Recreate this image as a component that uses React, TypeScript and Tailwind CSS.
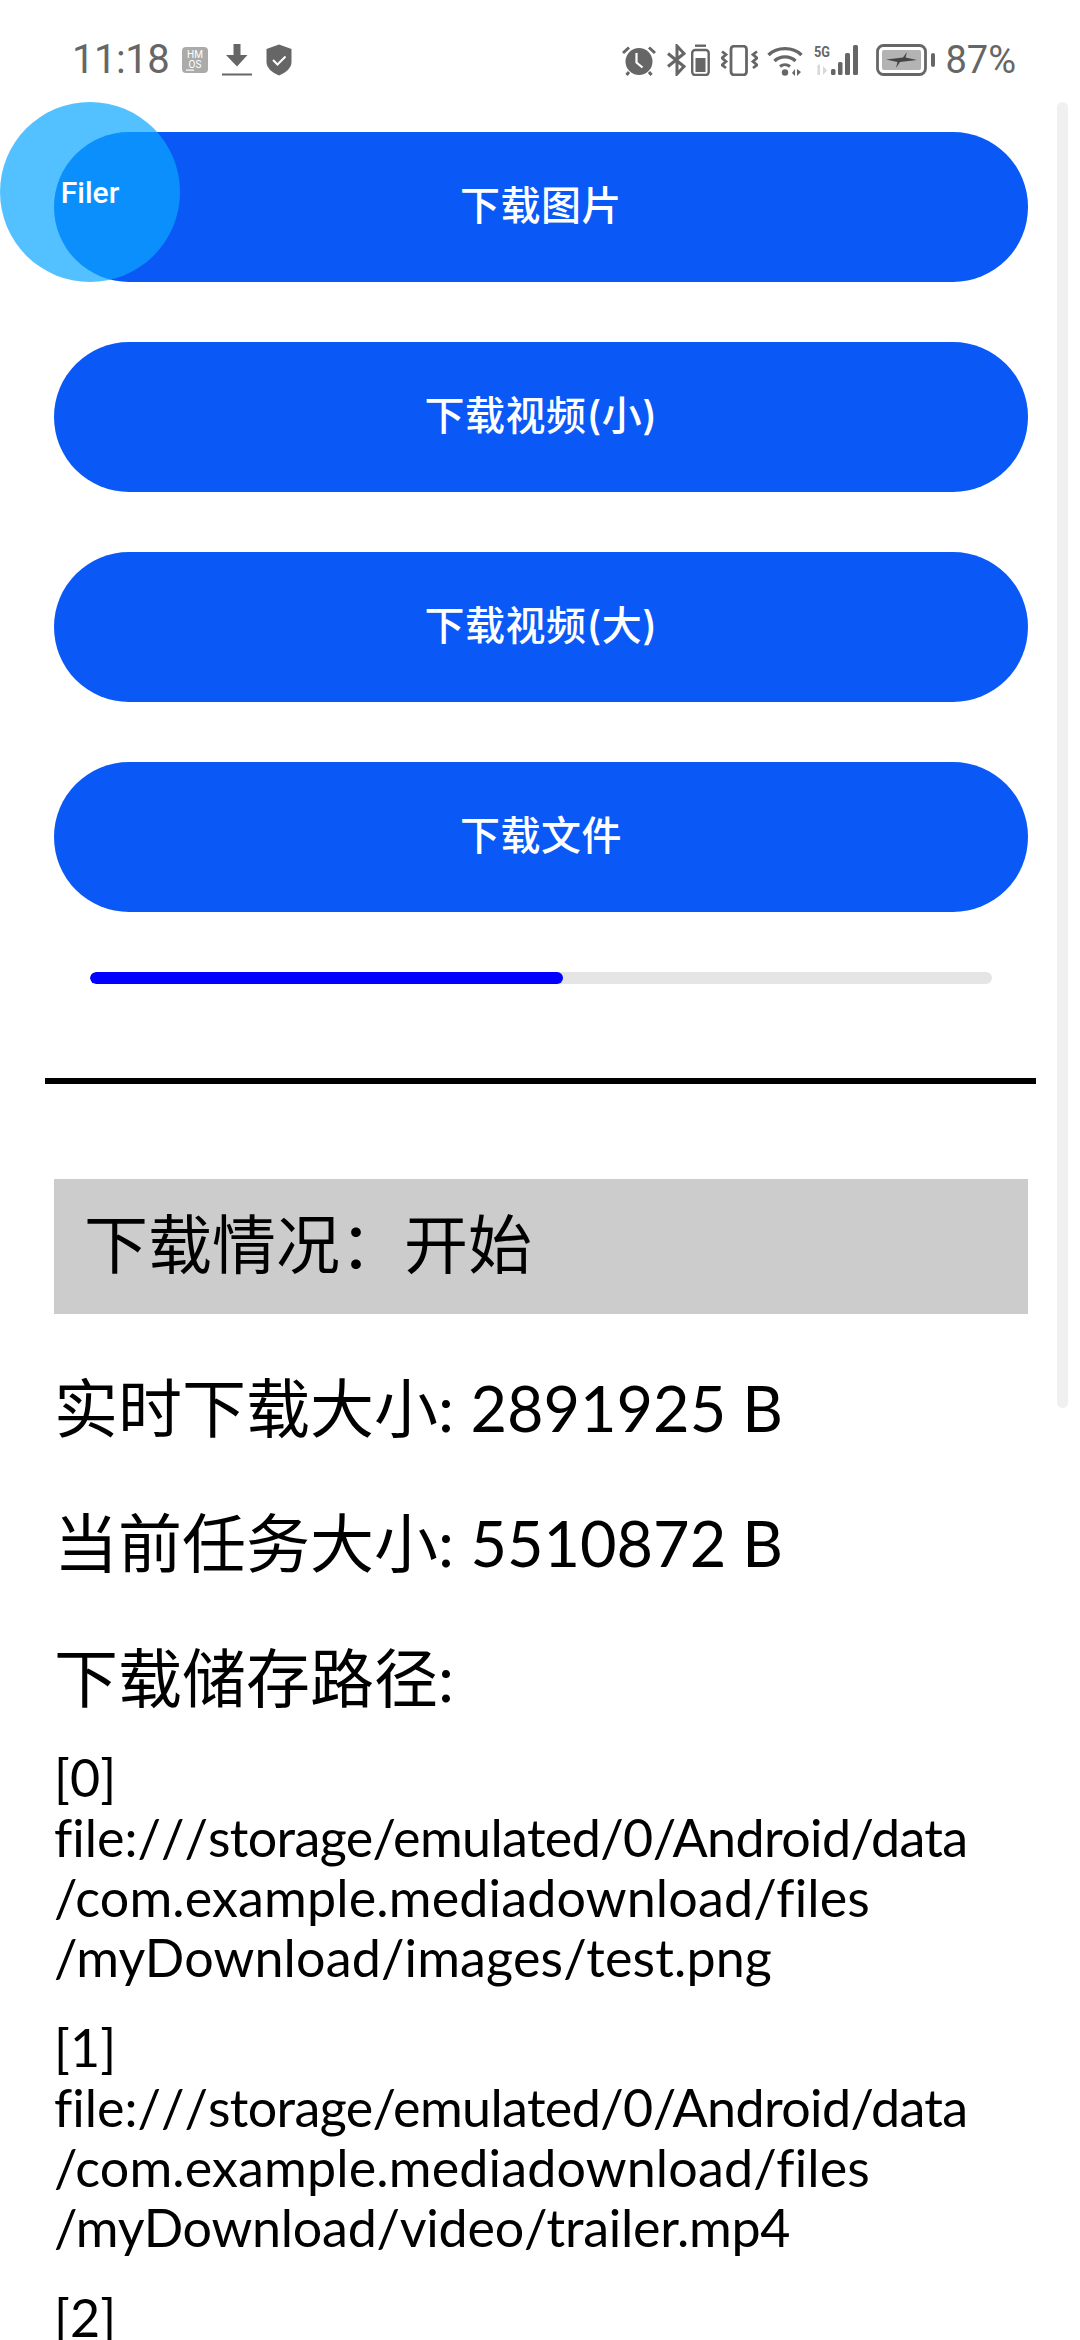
const DOWNLOADED = 2891925;
const TOTAL = 5510872;

const BUTTONS = ['下载图片', '下载视频(小)', '下载视频(大)', '下载文件'];

const PATHS = [
  ['[0]', 'file:///storage/emulated/0/Android/data', '/com.example.mediadownload/files', '/myDownload/images/test.png'],
  ['[1]', 'file:///storage/emulated/0/Android/data', '/com.example.mediadownload/files', '/myDownload/video/trailer.mp4'],
  ['[2]'],
];

// ── Status bar icons ────────────────────────────────────────────────────────

function HmosIcon() {
  return (
    <svg width="26" height="26" viewBox="0 0 26 26" className="ml-[13px]">
      <rect width="26" height="26" rx="4" fill="#ababab" />
      <text x="13" y="11" textAnchor="middle" fontSize="10" fill="#fff" fontFamily="Roboto">HM</text>
      <text x="13" y="21" textAnchor="middle" fontSize="10" fill="#fff" fontFamily="Roboto">OS</text>
      <rect x="4" y="22.5" width="8" height="1.2" fill="#fff" />
    </svg>
  );
}

function DownloadIcon() {
  return (
    <svg width="30" height="32" viewBox="0 0 30 32" className="ml-[14px]">
      <path d="M11.5 0h7v11h7L15 22.5 4 11h7.5z" fill="#666" />
      <rect y="29.5" width="30" height="2" fill="#666" />
    </svg>
  );
}

function ShieldIcon() {
  return (
    <svg width="26" height="32" viewBox="0 0 26 32" className="ml-[14px]">
      <path d="M13 0.5 25.5 5v13c0 6-5.5 10.5-12.500 13.500C6 28.500 0.500 24 0.500 18V5z" fill="#666" />
      <path d="M7 16l4.500 4.500L19.500 12.500" fill="none" stroke="#fff" strokeWidth="2" />
    </svg>
  );
}

function AlarmIcon() {
  return (
    <svg width="34" height="31" viewBox="0 0 34 31">
      <circle cx="17" cy="16.500" r="13.500" fill="#666" />
      <path d="M1 8 7 2.500M33 8 27 2.500M7 27l-2.500 3M27 27l2.500 3" stroke="#666" strokeWidth="3" fill="none" />
      <path d="M14.500 8v9.500l6 5" stroke="#fff" strokeWidth="2.200" fill="none" />
    </svg>
  );
}

function BluetoothBatteryIcon() {
  return (
    <svg width="43" height="32" viewBox="0 0 43 32" className="ml-[11px]">
      <path d="M1 9.500 17 22.500 10 30V2l7 7.500L1 22.500" fill="none" stroke="#666" strokeWidth="3" />
      <rect x="25.200" y="6" width="16.500" height="25" rx="3" fill="none" stroke="#666" strokeWidth="2.400" />
      <rect x="28" y="0.500" width="11" height="2.400" fill="#666" />
      <rect x="28.500" y="14" width="10" height="14" fill="#666" />
    </svg>
  );
}

function VibrateIcon() {
  return (
    <svg width="37" height="31" viewBox="0 0 37 31" className="ml-[11px]">
      <rect x="10" y="1.200" width="15.500" height="28.600" rx="3" fill="none" stroke="#666" strokeWidth="2.800" />
      <path d="M1 6.500l4 3-4 3.500 4 3.500-4 3.500 4 3" fill="none" stroke="#666" strokeWidth="2.800" />
      <path d="M36 6.500l-4 3 4 3.500-4 3.500 4 3.500-4 3" fill="none" stroke="#666" strokeWidth="2.800" />
    </svg>
  );
}

function WifiIcon() {
  return (
    <svg width="37" height="31" viewBox="0 0 37 31" className="ml-[9px]">
      <path d="M1.500 10C10 1.500 26 1.500 34.500 10" fill="none" stroke="#666" strokeWidth="3.400" />
      <path d="M7.500 16C13 10.500 23 10.500 28.500 16" fill="none" stroke="#666" strokeWidth="3.400" />
      <path d="M13 21.500C16 19 20 19 23 21.500" fill="none" stroke="#666" strokeWidth="3" />
      <circle cx="18" cy="27.500" r="3.200" fill="#666" />
      <path d="M25 28l3-4v7zM30 24v7l4-4z" fill="#666" />
    </svg>
  );
}

function SignalIcon() {
  return (
    <svg width="49" height="32" viewBox="0 0 49 32" className="ml-[10px]">
      <text x="0" y="13" fontSize="15" fontWeight="700" fill="#666" fontFamily="Roboto" textLength="16" lengthAdjust="spacingAndGlyphs">5G</text>
      <path d="M3 22l3-2v11h-2.500v-7.500zM9 22v9l4-4.500z" fill="#d8d8d8" />
      <rect x="17" y="25" width="4.500" height="6" rx="1.500" fill="#666" />
      <rect x="24" y="18" width="4.500" height="13" rx="1.500" fill="#666" />
      <rect x="31" y="9" width="5" height="22" rx="1.500" fill="#666" />
      <rect x="39" y="1" width="5" height="30" rx="1.500" fill="#666" />
    </svg>
  );
}

function ChargingBatteryIcon() {
  return (
    <svg width="59" height="32" viewBox="0 0 59 32" className="ml-[13px]">
      <rect x="1.500" y="1.500" width="48" height="29" rx="6" fill="none" stroke="#666" strokeWidth="2.800" />
      <rect x="6" y="6" width="39" height="20" rx="2" fill="#b3b3b3" />
      <path d="M10 15.500 27 13.500 31 8 29.500 13.500 41 16 24 18 20 24 21.500 18z" fill="#444" />
      <rect x="55" y="9" width="4" height="14" rx="2" fill="#666" />
    </svg>
  );
}

function StatusBar() {
  return (
    <div className="flex items-center justify-between h-[132px] pl-[72px] pr-[64px] pb-[12px] text-[#666] font-['Roboto',sans-serif]">
      <div className="flex items-center">
        <span className="w-[97px] text-[40px] leading-none tracking-[-0.5px]">11:18</span>
        <HmosIcon />
        <DownloadIcon />
        <ShieldIcon />
      </div>
      <div className="flex items-center">
        <AlarmIcon />
        <BluetoothBatteryIcon />
        <VibrateIcon />
        <WifiIcon />
        <SignalIcon />
        <ChargingBatteryIcon />
        <span className="ml-[10px] text-[38px] leading-none">87%</span>
      </div>
    </div>
  );
}

function PathLine({ text }: { text: string }) {
  if (text.startsWith('file:///')) {
    return (
      <div className="tracking-[-0.62px]">
        <span className="[font-kerning:none] tracking-normal">file:///</span>
        {text.slice(8)}
      </div>
    );
  }
  return <div className={text.endsWith('.mp4') ? 'tracking-[-0.25px]' : 'tracking-[0.15px]'}>{text}</div>;
}

// ── Page ────────────────────────────────────────────────────────────────────

export default function App() {
  const percent = (DOWNLOADED / TOTAL) * 100;

  return (
    <div className="relative w-[1080px] h-[2340px] overflow-hidden bg-white text-black font-['Lato','Noto_Sans_CJK_SC',sans-serif]">
      <StatusBar />

      <div className="flex flex-col gap-[60px] pl-[54px] pr-[52px]">
        {BUTTONS.map((label) => (
          <button
            key={label}
            className="h-[150px] pb-[3px] rounded-full bg-[#0a59f7] text-white text-[40px] font-medium tracking-[0.5px] font-['Inter','Noto_Sans_CJK_SC',sans-serif]"
          >
            {label}
          </button>
        ))}
      </div>

      <div className="mt-[60px] ml-[90px] w-[902px] h-[12px] rounded-full bg-[#e5e5e5] overflow-hidden">
        <div className="h-full rounded-full bg-[#0000ff]" style={{ width: `${percent}%` }} />
      </div>

      <div className="mt-[94px] ml-[45px] w-[991px] h-[6px] bg-black" />

      <div className="mt-[95px] ml-[54px] w-[974px]">
        <div className="flex items-center h-[135px] pl-[30px] pb-[6px] bg-[#cccccc] text-[64px]">下载情况：开始</div>
        <div className="mt-[49px] h-[90px] text-[64px] leading-[90px]">实时下载大小: <span className="text-[63px]">{DOWNLOADED} B</span></div>
        <div className="mt-[45px] h-[90px] text-[64px] leading-[90px]">当前任务大小: <span className="text-[63px]">{TOTAL} B</span></div>
        <div className="mt-[45px] h-[90px] text-[64px] leading-[90px]">下载储存路径:</div>
        <div className="mt-[24px] flex flex-col gap-[30px] text-[52px] leading-[60px] whitespace-nowrap [font-variant-ligatures:none]">
          {PATHS.map((lines) => (
            <div key={lines[0]}>
              {lines.map((line) => (
                <PathLine key={line} text={line} />
              ))}
            </div>
          ))}
        </div>
      </div>

      {/* Scrollbar */}
      <div className="absolute top-[102px] right-[12px] w-[11px] h-[1306px] rounded-full bg-[#f0f0f0]" />

      {/* Floating Filer bubble */}
      <div className="absolute top-[102px] left-0 w-[180px] h-[180px] rounded-full bg-[#0aa7ff]/70 flex items-center justify-center text-white text-[30px] font-medium font-['Roboto',sans-serif]">
        Filer
      </div>
    </div>
  );
}
